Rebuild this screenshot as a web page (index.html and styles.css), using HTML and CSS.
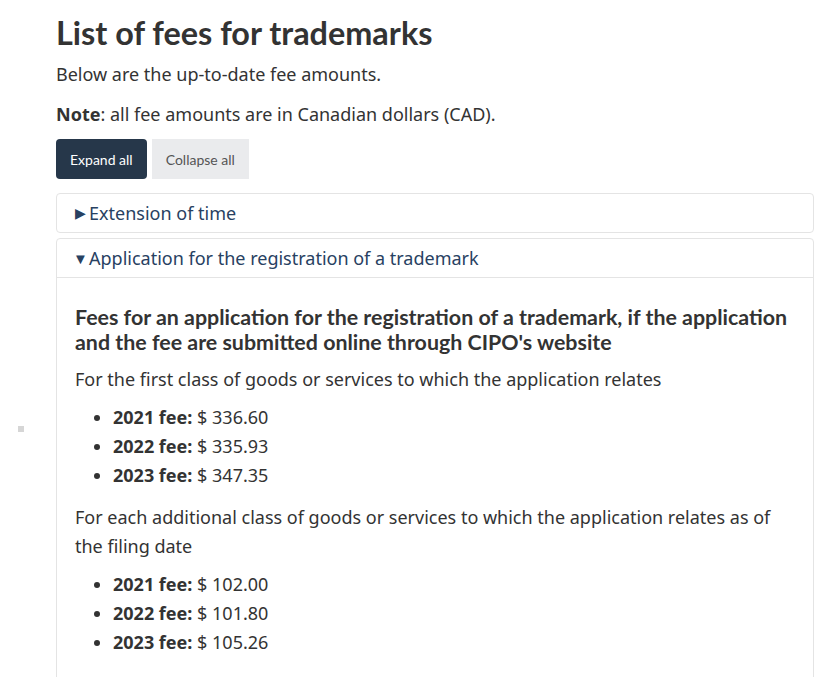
FILE: index.html
```html
<!DOCTYPE html>
<html lang="en">
<head>
<meta charset="utf-8">
<title>List of fees for trademarks</title>
<link rel="stylesheet" href="styles.css">
</head>
<body>
<span class="speck"></span>
<main class="page">
  <h1 class="title">List of fees for trademarks</h1>
  <p class="lead">Below are the up-to-date fee amounts.</p>
  <p class="lead"><strong>Note</strong>: all fee amounts are in Canadian dollars (CAD).</p>
  <div class="toggles">
    <button class="btn btn-primary" type="button">Expand all</button>
    <button class="btn btn-default" type="button">Collapse all</button>
  </div>
  <details class="panel">
    <summary class="panel-summary">Extension of time</summary>
  </details>
  <details class="panel" open>
    <summary class="panel-summary">Application for the registration of a trademark</summary>
    <div class="panel-body">
      <h3 class="sub">Fees for an application for the registration of a trademark, if the application and the fee are submitted online through CIPO's website</h3>
      <p class="txt">For the first class of goods or services to which the application relates</p>
      <ul class="fees">
        <li><strong>2021 fee:</strong> $ 336.60</li>
        <li><strong>2022 fee:</strong> $ 335.93</li>
        <li><strong>2023 fee:</strong> $ 347.35</li>
      </ul>
      <p class="txt">For each additional class of goods or services to which the application relates as of the filing date</p>
      <ul class="fees">
        <li><strong>2021 fee:</strong> $ 102.00</li>
        <li><strong>2022 fee:</strong> $ 101.80</li>
        <li><strong>2023 fee:</strong> $ 105.26</li>
      </ul>
    </div>
  </details>
</main>
</body>
</html>
```
FILE: styles.css
```css
html, body {
  margin: 0;
  padding: 0;
  background: #fff;
}
body {
  font-family: "Noto Sans", "Open Sans", sans-serif;
  color: #333;
  font-size: 18px;
  position: relative;
}
.page {
  padding: 13px 23px 0 56px;
}
.title {
  font-family: Lato, sans-serif;
  font-weight: 700;
  font-size: 32.4px;
  line-height: 40px;
  margin: 0 0 8px;
  color: #333;
}
.lead {
  margin: 0 0 14px;
  line-height: 26px;
}
.lead + .lead {
  margin-bottom: 12px;
}
.toggles {
  display: flex;
  gap: 5px;
  margin: 0 0 14px;
}
.btn {
  font-family: Lato, sans-serif;
  font-size: 14px;
  height: 40px;
  padding: 0 14px;
  border: 0;
  border-radius: 4px;
}
.btn-primary {
  background: #26374a;
  color: #fff;
}
.btn-default {
  background: #eaebed;
  color: #555;
  border-radius: 0;
  padding: 0 14px;
}
.panel {
  border: 1px solid #e4e4e4;
  border-radius: 4px;
  margin-bottom: 5px;
}
.panel-summary {
  color: #284162;
  padding: 0 18px;
  height: 38px;
  line-height: 38px;
  font-size: 18px;
  list-style: none;
  cursor: pointer;
}
.panel-summary::-webkit-details-marker { display: none; }
.panel-summary::before {
  content: "\25B6";
  font-size: 14px;
  width: 14px;
  display: inline-block;
  vertical-align: 2px;
}
.panel[open] > .panel-summary::before {
  content: "\25BC";
  font-size: 15px;
  width: 16px;
  margin-left: -2px;
  vertical-align: 1px;
}
.panel[open] > .panel-summary {
  border-bottom: 1px solid #e4e4e4;
}
.panel-body {
  padding: 27px 18px 20px 18px;
}
.sub {
  font-family: Lato, sans-serif;
  font-weight: 700;
  font-size: 21.4px;
  line-height: 25px;
  margin: 0 0 10px;
  color: #333;
}
.txt {
  margin: 0 0 9px;
  line-height: 29px;
}
.fees {
  margin: 0 0 13px;
  padding-left: 38px;
}
.fees li {
  line-height: 29px;
}
.speck {
  position: absolute;
  left: 18px;
  top: 426px;
  width: 6px;
  height: 6px;
  background: #d6d6d6;
}
```
